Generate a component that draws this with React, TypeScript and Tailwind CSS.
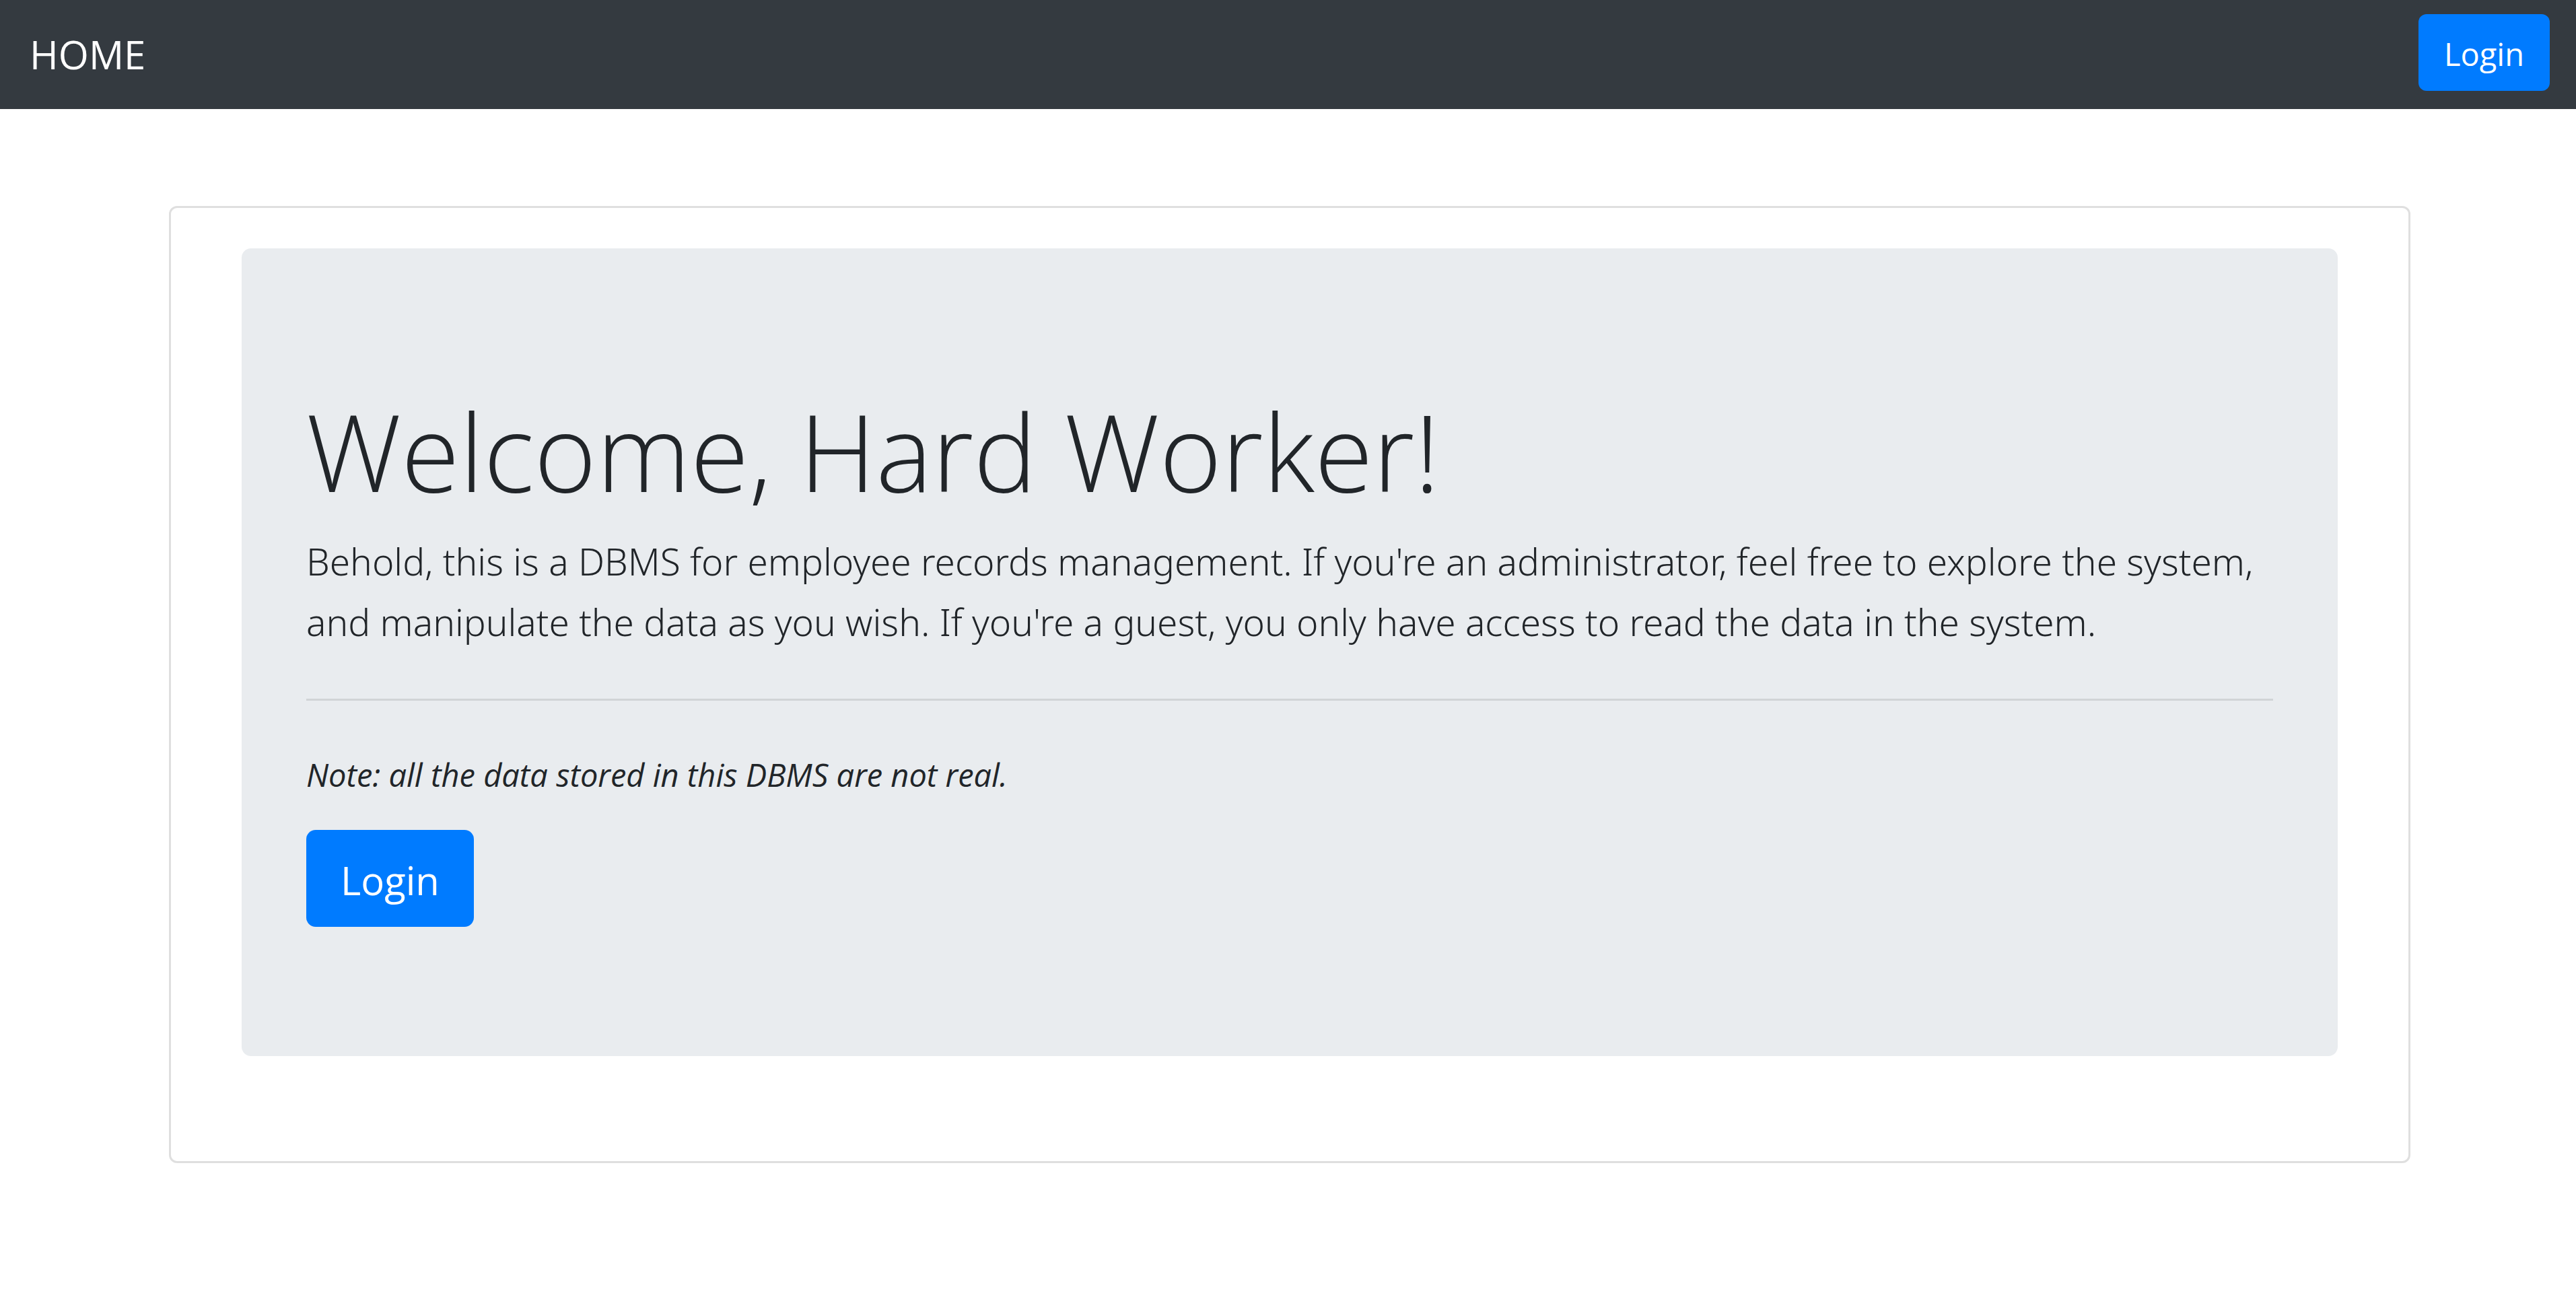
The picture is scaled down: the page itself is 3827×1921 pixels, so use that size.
function Navbar() {
  return (
    <nav className="flex items-center justify-between bg-[#343a40] pt-[21px] pr-[39px] pb-[27px] pl-11 text-white">
      <a href="#home" className="pt-1.5 text-[58px] leading-[90px]">
        HOME
      </a>
      <button
        type="button"
        className="cursor-pointer rounded-xl bg-[#007bff] px-[38px] pt-[23px] pb-[19px] text-[47px] leading-[72px]"
      >
        Login
      </button>
    </nav>
  );
}

function Jumbotron() {
  return (
    <section className="rounded-[14px] bg-[#e9ecef] px-24 pt-[200px] pb-48">
      <h1 className="text-[158px] leading-[202px] font-light">Welcome, Hard Worker!</h1>
      <p className="mt-[18px] font-['Noto_Sans',sans-serif] text-[55px] leading-[90px] font-light">
        Behold, this is a DBMS for employee records management. If you're an administrator, feel free to explore the
        system, and manipulate the data as you wish. If you're a guest, you only have access to read the data in the
        system.
      </p>
      <hr className="mt-[69px] border-t-3 border-black/10" />
      <p className="mt-[74px] text-[47px] leading-[72px] italic">
        Note: all the data stored in this DBMS are not real.
      </p>
      <button
        type="button"
        className="mt-[46px] block cursor-pointer rounded-[14px] bg-[#007bff] px-[51px] pt-[30px] pb-6 text-[58px] leading-[90px] text-white"
      >
        Login
      </button>
    </section>
  );
}

export default function App() {
  return (
    <div className="min-h-screen bg-white font-['Open_Sans',sans-serif] text-[#212529]">
      <Navbar />
      <main className="pt-36 pr-[246px] pl-[251px]">
        <div className="rounded-xl border-3 border-black/[0.125] px-[105px] pt-[60px] pb-[156px]">
          <Jumbotron />
        </div>
      </main>
    </div>
  );
}
